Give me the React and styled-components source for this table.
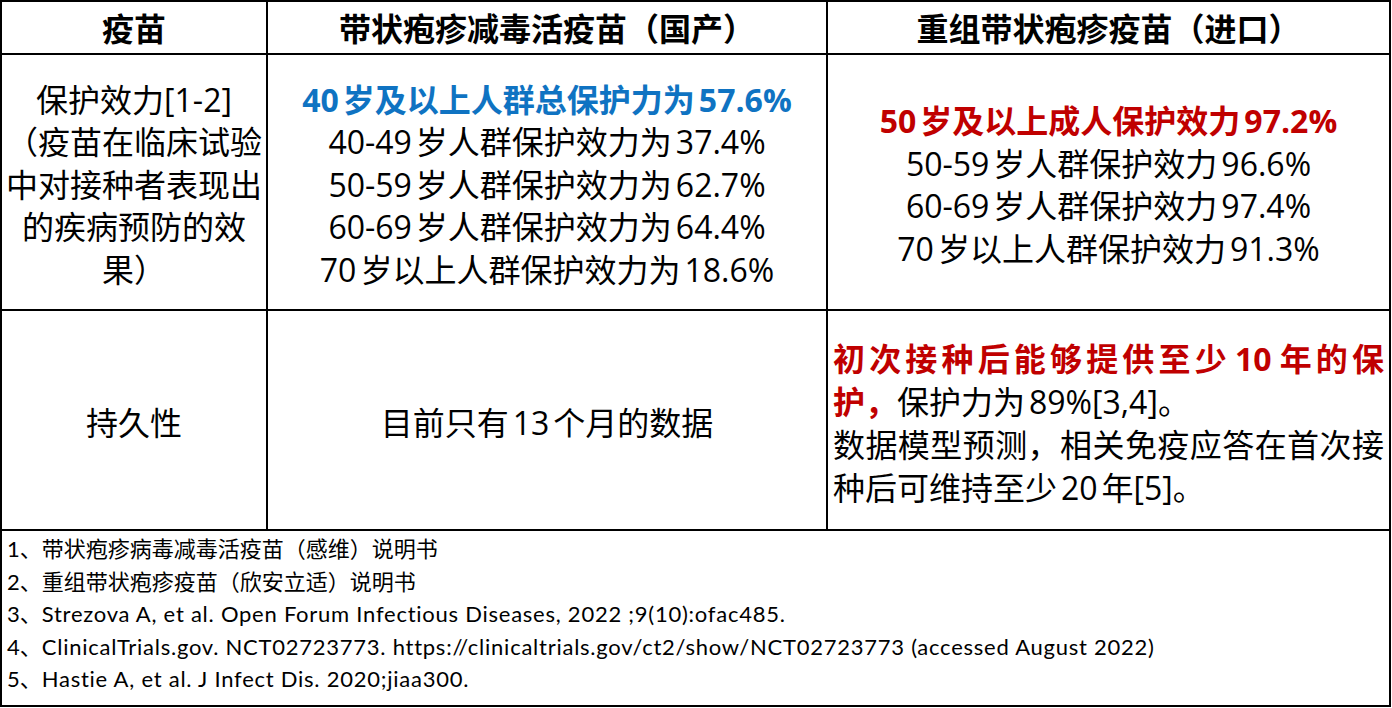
import React from "react";
import styled, { createGlobalStyle } from "styled-components";

const GlobalStyle = createGlobalStyle`
  html, body {
    margin: 0;
    padding: 0;
    background: #ffffff;
  }
  body {
    font-family: "Open Sans", "Noto Sans CJK SC", sans-serif;
    color: #000000;
    text-autospace: normal;
  }
`;

const Table = styled.div`
  width: 1391px;
  height: 707px;
  box-sizing: border-box;
  border: 2px solid #000;
  display: grid;
  grid-template-columns: 266px 560px 1fr;
  grid-template-rows: 53px 256px 220px 1fr;
`;

const Cell = styled.div`
  box-sizing: border-box;
  border-right: ${(p) => (p.$last ? "none" : "2px solid #000")};
  border-bottom: 2px solid #000;
  display: flex;
  flex-direction: column;
  justify-content: center;
  align-items: ${(p) => (p.$left ? "stretch" : "center")};
  text-align: ${(p) => (p.$left ? "left" : "center")};
  padding: ${(p) => (p.$left ? "5px 5px 0 5px" : "6px 4px 0")};
  font-size: 32px;
  line-height: 42.5px;
`;

const HeadCell = styled(Cell)`
  font-weight: 700;
  font-size: 32px;
  line-height: 40px;
  padding: 2px 4px 0;
`;

const Line = styled.div`
  white-space: nowrap;
  color: ${(p) => p.$color || "#000"};
  font-weight: ${(p) => (p.$bold ? 700 : 400)};
`;

const JustLine = styled.div`
  white-space: nowrap;
  text-align: justify;
  text-align-last: ${(p) => (p.$full ? "justify" : "left")};
  line-height: 43px;
`;

const Red = styled.span`
  color: #c00000;
  font-weight: 700;
`;

const Footer = styled.div`
  grid-column: 1 / -1;
  padding: 2px 5px 0;
  font-family: "Lato", "Noto Sans CJK SC", sans-serif;
  font-size: 22px;
  line-height: 32.6px;
`;

const Ref = styled.div`
  white-space: nowrap;
`;

const Latin = styled.span`
  letter-spacing: 0.75px;
`;

const BLUE = "#0f73c2";
const RED = "#c00000";

export default function App() {
  return (
    <>
      <GlobalStyle />
      <Table>
        <HeadCell>疫苗</HeadCell>
        <HeadCell>带状疱疹减毒活疫苗（国产）</HeadCell>
        <HeadCell $last>重组带状疱疹疫苗（进口）</HeadCell>

        <Cell>
          <Line>保护效力[1-2]</Line>
          <Line>（疫苗在临床试验</Line>
          <Line>中对接种者表现出</Line>
          <Line>的疾病预防的效</Line>
          <Line>果）</Line>
        </Cell>
        <Cell>
          <Line $bold $color={BLUE}>40岁及以上人群总保护力为57.6%</Line>
          <Line>40-49岁人群保护效力为37.4%</Line>
          <Line>50-59岁人群保护效力为62.7%</Line>
          <Line>60-69岁人群保护效力为64.4%</Line>
          <Line>70岁以上人群保护效力为18.6%</Line>
        </Cell>
        <Cell $last>
          <Line $bold $color={RED}>50岁及以上成人保护效力97.2%</Line>
          <Line>50-59岁人群保护效力96.6%</Line>
          <Line>60-69岁人群保护效力97.4%</Line>
          <Line>70岁以上人群保护效力91.3%</Line>
        </Cell>

        <Cell>
          <Line>持久性</Line>
        </Cell>
        <Cell>
          <Line>目前只有13个月的数据</Line>
        </Cell>
        <Cell $last $left>
          <JustLine $full>
            <Red>初次接种后能够提供至少10年的保</Red>
          </JustLine>
          <JustLine>
            <Red>护，</Red>保护力为89%[3,4]。
          </JustLine>
          <JustLine $full>数据模型预测，相关免疫应答在首次接</JustLine>
          <JustLine>种后可维持至少20年[5]。</JustLine>
        </Cell>

        <Footer>
          <Ref>1、带状疱疹病毒减毒活疫苗（感维）说明书</Ref>
          <Ref>2、重组带状疱疹疫苗（欣安立适）说明书</Ref>
          <Ref>
            3、<Latin>Strezova A, et al. Open Forum Infectious Diseases, 2022 ;9(10):ofac485.</Latin>
          </Ref>
          <Ref>
            4、<Latin>ClinicalTrials.gov. NCT02723773. https://clinicaltrials.gov/ct2/show/NCT02723773 (accessed August 2022)</Latin>
          </Ref>
          <Ref>
            5、<Latin>Hastie A, et al. J Infect Dis. 2020;jiaa300.</Latin>
          </Ref>
        </Footer>
      </Table>
    </>
  );
}
